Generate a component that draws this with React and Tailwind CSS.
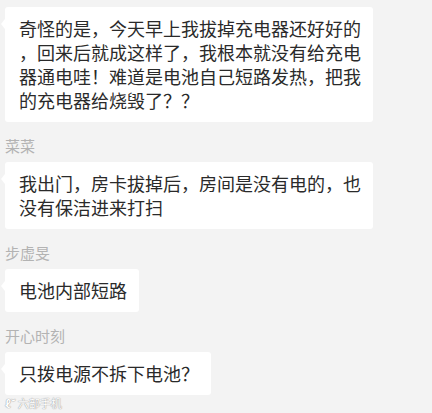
const messages = [
  { name: null, lines: ["奇怪的是，今天早上我拔掉充电器还好好的", "，回来后就成这样了，我根本就没有给充电", "器通电哇！难道是电池自己短路发热，把我", "的充电器给烧毁了？？"] },
  { name: "菜菜", lines: ["我出门，房卡拔掉后，房间是没有电的，也", "没有保洁进来打扫"] },
  { name: "步虚旻", lines: ["电池内部短路"] },
  { name: "开心时刻", lines: ["只拨电源不拆下电池？"] },
];

function Bubble({ lines }) {
  return (
    <div className="relative w-fit bg-white rounded-[3px] pl-[14px] pr-[12px] pt-[9px] pb-[10px] text-[18px] leading-[24px] text-[#2a2a2a]">
      {/* little tail on the left */}
      <span className="absolute left-[-4px] top-[12px] w-0 h-0 border-y-[5px] border-y-transparent border-r-[4px] border-r-white" />
      {lines.map((l, i) => (
        <div key={i} className="whitespace-nowrap">{l}</div>
      ))}
    </div>
  );
}

export default function App() {
  return (
    <div
      className="w-[432px] h-[413px] overflow-hidden bg-[#f3f3f3] pl-[5px] pt-[7px]"
      style={{ fontFamily: '"Noto Sans CJK SC", "Noto Sans", sans-serif' }}
    >
      {messages.map((m, i) => (
        <div key={i}>
          {m.name && (
            <div className="mt-[14px] mb-[6px] h-[20px] text-[15px] leading-[20px] text-[#b3b3b3]">
              {m.name}
            </div>
          )}
          <Bubble lines={m.lines} />
        </div>
      ))}

      {/* watermark */}
      <div className="mt-[1px] flex items-center gap-[2px] text-[11px] leading-[14px] text-white [text-shadow:0_0_1px_#9a9a9a,0_0_1px_#9a9a9a]">
        <span className="font-bold">ℓ˘</span>
        <span>六部手机</span>
      </div>
    </div>
  );
}
